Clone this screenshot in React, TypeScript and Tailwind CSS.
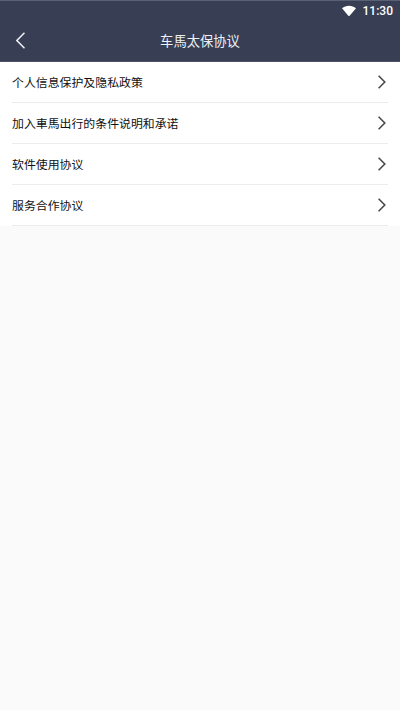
import React from 'react';

interface Agreement {
  id: number;
  title: string;
}

const agreements: Agreement[] = [
  { id: 1, title: '个人信息保护及隐私政策' },
  { id: 2, title: '加入車馬出行的条件说明和承诺' },
  { id: 3, title: '软件使用协议' },
  { id: 4, title: '服务合作协议' },
];

function StatusBar() {
  return (
    <div className="flex h-[19px] items-center justify-end gap-[7px] pr-[7px]">
      <svg className="h-[12px] w-[14px]" viewBox="0 0 15 12" fill="#ffffff">
        <path d="M0 3C4.2-.6 10.8-.6 15 3L8.2 11Q7.5 11.8 6.8 11Z" />
      </svg>
      <span className="font-['Roboto',sans-serif] text-[12px] leading-none font-medium text-white">
        11:30
      </span>
    </div>
  );
}

function AgreementRow({ title }: { title: string }) {
  return (
    <li className="flex h-[41px] items-center justify-between border-b border-[#ececec] pr-[2px]">
      <span className="text-[11.9px] leading-none whitespace-nowrap text-[#111111]">{title}</span>
      <svg
        className="h-[14px] w-[8px]"
        viewBox="0 0 8 14"
        fill="none"
        stroke="#4a4a4a"
        strokeWidth="1.6"
      >
        <path d="M.6 .7L6.8 7L.6 13.3" />
      </svg>
    </li>
  );
}

export default function App() {
  return (
    <div className="h-[710px] w-[400px] overflow-hidden bg-[#fafafa] font-['Noto_Sans_CJK_SC',sans-serif]">
      <header className="h-[62px] border-t border-b border-t-[#596176] border-b-[#4c5167] bg-[#383f54]">
        <StatusBar />
        <div className="grid h-[41px] grid-cols-[40px_1fr_40px] items-center">
          <button className="pl-[16px]" aria-label="返回">
            <svg
              className="h-[17px] w-[9px]"
              viewBox="0 0 9 17"
              fill="none"
              stroke="#eef0f5"
              strokeWidth="1.5"
            >
              <path d="M8.5 .7L.9 8.5L8.5 16.3" />
            </svg>
          </button>
          <h1 className="pt-px text-center text-[13.3px] leading-none text-[#eef0f5]">
            车馬太保协议
          </h1>
        </div>
      </header>

      <ul className="bg-white px-3">
        {agreements.map((item) => (
          <AgreementRow key={item.id} title={item.title} />
        ))}
      </ul>
    </div>
  );
}
